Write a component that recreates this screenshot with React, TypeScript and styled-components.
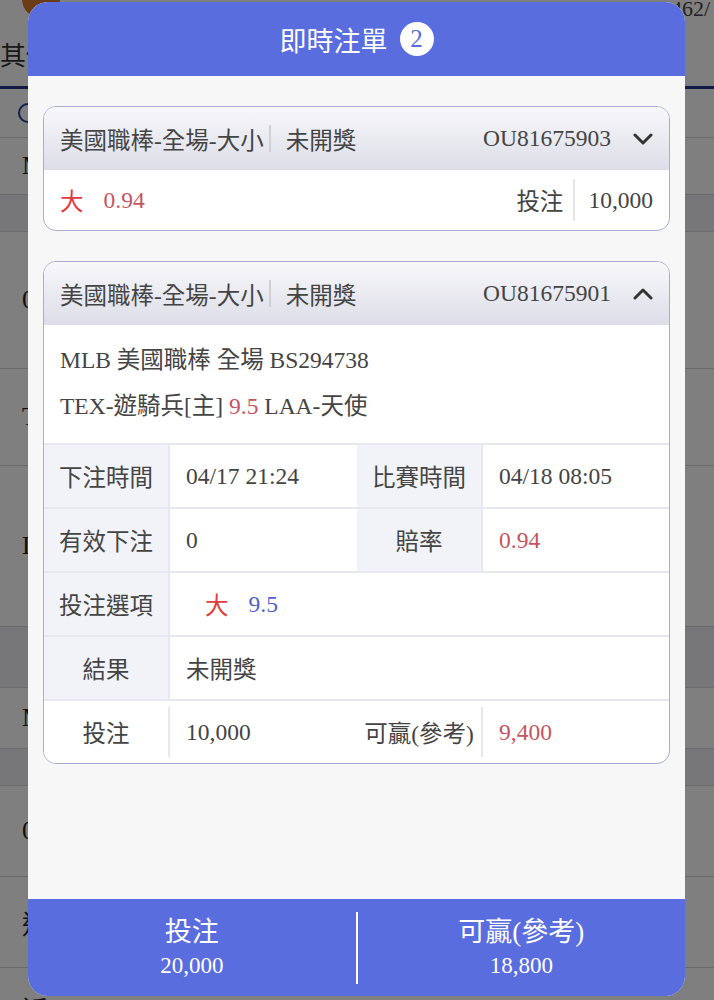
import React from 'react';
import styled, { createGlobalStyle } from 'styled-components';

const GlobalStyle = createGlobalStyle`
  html, body {
    margin: 0;
    padding: 0;
    background: #ffffff;
  }
  body {
    font-family: 'Liberation Serif', 'Noto Sans CJK TC', serif;
    color: #444;
  }
`;

const BLUE = '#5a6ddf';
const RED = '#e23b3b';
const ODDS = '#c55462';

/* ---------- page behind the dialog ---------- */

const BehindPage = styled.div`
  position: relative;
  width: 714px;
  height: 1000px;
  overflow: hidden;
  background: #fff;
`;

const TopStrip = styled.div`
  display: flex;
  justify-content: space-between;
  align-items: flex-start;
  height: 20px;
  padding: 0 4px 0 22px;
  font-size: 22px;
  line-height: 18px;
  color: #444;
`;

const Avatar = styled.div`
  width: 38px;
  height: 24px;
  margin-top: -6px;
  border-radius: 0 0 20px 20px;
  background: #d4782a;
`;

const TabBar = styled.div`
  display: flex;
  align-items: center;
  height: 66px;
  border-bottom: 3px solid #24358a;
  font-family: 'Noto Sans CJK TC', sans-serif;
  font-size: 26px;
  color: #333;
`;

const ListRow = styled.div<{ $h: number; $shade?: boolean }>`
  display: flex;
  align-items: center;
  height: ${(p) => p.$h}px;
  padding-left: 22px;
  border-bottom: 1px solid #d6d6d6;
  background: ${(p) => (p.$shade ? '#eeeef2' : '#fff')};
  font-size: 26px;
  color: #222;
`;

const ClockMark = styled.span`
  display: inline-block;
  width: 16px;
  height: 16px;
  margin-left: -4px;
  border: 2px solid #2a3a9a;
  border-radius: 50%;
`;

const Overlay = styled.div`
  position: fixed;
  inset: 0;
  background: rgba(0, 0, 0, 0.5);
`;

/* ---------- dialog ---------- */

const Dialog = styled.div`
  position: fixed;
  top: 2px;
  left: 28px;
  width: 657px;
  height: 994px;
  display: flex;
  flex-direction: column;
  border-radius: 20px;
  overflow: hidden;
  background: #f7f7f8;
`;

const DialogHeader = styled.div`
  flex: 0 0 74px;
  display: flex;
  align-items: center;
  justify-content: center;
  gap: 12px;
  background: ${BLUE};
  color: #fff;
  font-family: 'Noto Sans CJK TC', sans-serif;
  font-size: 27px;
`;

const CountBadge = styled.span`
  display: flex;
  align-items: center;
  justify-content: center;
  width: 34px;
  height: 34px;
  border-radius: 50%;
  background: #fff;
  color: ${BLUE};
  font-family: 'Liberation Serif', serif;
  font-size: 25px;
`;

const DialogBody = styled.div`
  flex: 1;
  display: flex;
  flex-direction: column;
  gap: 30px;
  padding: 30px 15px;
`;

const Card = styled.div`
  border: 1.5px solid #a9acd0;
  border-radius: 13px;
  overflow: hidden;
  background: #fff;
  font-size: 23.5px;
`;

const CardHeader = styled.div`
  display: flex;
  align-items: center;
  height: 63px;
  padding: 0 16px;
  background: linear-gradient(#f8f8fb, #dcdde7);
  color: #444;
`;

const Divider = styled.span<{ $h: number }>`
  display: inline-block;
  width: 2px;
  height: ${(p) => p.$h}px;
  background: #d0d0d6;
`;

const HeaderSep = styled(Divider)`
  margin: 0 15px 0 5px;
`;

const OrderNo = styled.span`
  margin-left: auto;
  margin-right: 22px;
`;

const Chevron = styled.svg`
  width: 20px;
  height: 12px;
  flex: none;
`;

const SummaryRow = styled.div`
  display: flex;
  align-items: center;
  height: 60px;
  padding: 0 16px;
`;

const Pick = styled.span`
  color: ${RED};
  font-family: 'Noto Sans CJK TC', sans-serif;
`;

const Odds = styled.span<{ $gap?: number }>`
  color: ${ODDS};
  margin-left: ${(p) => p.$gap ?? 0}px;
`;

const StakeLabel = styled.span`
  margin-left: auto;
`;

const StakeSep = styled(Divider)`
  margin: 0 13px 0 10px;
  background: #e4e4ea;
`;

const MatchInfo = styled.div`
  padding: 12px 16px 14px;
  line-height: 46px;
`;

const DetailRow = styled.div<{ $last?: boolean }>`
  display: grid;
  grid-template-columns: 124px 189px 124px 1fr;
  align-items: ${(p) => (p.$last ? 'center' : 'stretch')};
  height: 64px;
  border-top: 2px solid #e7e8ef;
  box-sizing: border-box;
`;

const Label = styled.div<{ $plain?: boolean }>`
  display: flex;
  align-items: center;
  justify-content: center;
  height: 100%;
  background: ${(p) => (p.$plain ? '#fff' : '#f1f3f9')};
  white-space: nowrap;
`;

const Value = styled.div<{ $span?: boolean; $short?: boolean; $indent?: number; $color?: string }>`
  display: flex;
  align-items: center;
  gap: 20px;
  height: ${(p) => (p.$short ? '50px' : '100%')};
  padding-left: ${(p) => p.$indent ?? 16}px;
  border-left: 2px solid #e7e8ef;
  grid-column: ${(p) => (p.$span ? 'span 3' : 'auto')};
  color: ${(p) => p.$color ?? '#444'};
  box-sizing: border-box;
`;

const LineValue = styled.span`
  color: #4f5fd0;
`;

const DialogFooter = styled.div`
  flex: 0 0 97px;
  display: flex;
  align-items: center;
  background: ${BLUE};
  color: #fff;
`;

const FooterCell = styled.div`
  flex: 1;
  display: flex;
  flex-direction: column;
  align-items: center;
`;

const FooterLabel = styled.div`
  font-size: 27px;
  line-height: 36px;
`;

const FooterValue = styled.div`
  font-size: 23px;
  line-height: 32px;
`;

const FooterSep = styled.div`
  width: 2px;
  height: 72px;
  background: #fff;
`;

const ChevronIcon: React.FC<{ up?: boolean }> = ({ up }) => (
  <Chevron viewBox="0 0 20 12">
    <polyline
      points={up ? '2,10 10,2 18,10' : '2,2 10,10 18,2'}
      fill="none"
      stroke="#333"
      strokeWidth="3"
      strokeLinecap="round"
      strokeLinejoin="round"
    />
  </Chevron>
);

const BetHeader: React.FC<{ orderNo: string; open?: boolean }> = ({ orderNo, open }) => (
  <CardHeader>
    <span>美國職棒-全場-大小</span>
    <HeaderSep $h={27} />
    <span>未開獎</span>
    <OrderNo>{orderNo}</OrderNo>
    <ChevronIcon up={open} />
  </CardHeader>
);

const App: React.FC = () => (
  <>
    <GlobalStyle />
    <BehindPage>
      <TopStrip>
        <Avatar />
        <span>1462/</span>
      </TopStrip>
      <TabBar>其他</TabBar>
      <ListRow $h={48}>
        <ClockMark />
      </ListRow>
      <ListRow $h={56}>M</ListRow>
      <ListRow $h={36} $shade />
      <ListRow $h={136}>0</ListRow>
      <ListRow $h={96}>T</ListRow>
      <ListRow $h={160}>L</ListRow>
      <ListRow $h={60} $shade />
      <ListRow $h={60}>M</ListRow>
      <ListRow $h={36} $shade />
      <ListRow $h={90}>0</ListRow>
      <ListRow $h={90}>近</ListRow>
      <ListRow $h={80}>近</ListRow>
    </BehindPage>
    <Overlay />
    <Dialog>
      <DialogHeader>
        <span>即時注單</span>
        <CountBadge>2</CountBadge>
      </DialogHeader>
      <DialogBody>
        <Card>
          <BetHeader orderNo="OU81675903" />
          <SummaryRow>
            <Pick>大</Pick>
            <Odds $gap={20}>0.94</Odds>
            <StakeLabel>投注</StakeLabel>
            <StakeSep $h={42} />
            <span>10,000</span>
          </SummaryRow>
        </Card>
        <Card>
          <BetHeader orderNo="OU81675901" open />
          <MatchInfo>
            <div>MLB 美國職棒 全場 BS294738</div>
            <div>
              TEX-遊騎兵[主] <Odds>9.5</Odds> LAA-天使
            </div>
          </MatchInfo>
          <DetailRow>
            <Label>下注時間</Label>
            <Value>04/17 21:24</Value>
            <Label>比賽時間</Label>
            <Value>04/18 08:05</Value>
          </DetailRow>
          <DetailRow>
            <Label>有效下注</Label>
            <Value>0</Value>
            <Label>賠率</Label>
            <Value $color={ODDS}>0.94</Value>
          </DetailRow>
          <DetailRow>
            <Label>投注選項</Label>
            <Value $span $indent={35}>
              <Pick>大</Pick>
              <LineValue>9.5</LineValue>
            </Value>
          </DetailRow>
          <DetailRow>
            <Label>結果</Label>
            <Value $span>未開獎</Value>
          </DetailRow>
          <DetailRow $last>
            <Label $plain>投注</Label>
            <Value $short>10,000</Value>
            <Label $plain>可贏(參考)</Label>
            <Value $short $color={ODDS}>9,400</Value>
          </DetailRow>
        </Card>
      </DialogBody>
      <DialogFooter>
        <FooterCell>
          <FooterLabel>投注</FooterLabel>
          <FooterValue>20,000</FooterValue>
        </FooterCell>
        <FooterSep />
        <FooterCell>
          <FooterLabel>可贏(參考)</FooterLabel>
          <FooterValue>18,800</FooterValue>
        </FooterCell>
      </DialogFooter>
    </Dialog>
  </>
);

export default App;
